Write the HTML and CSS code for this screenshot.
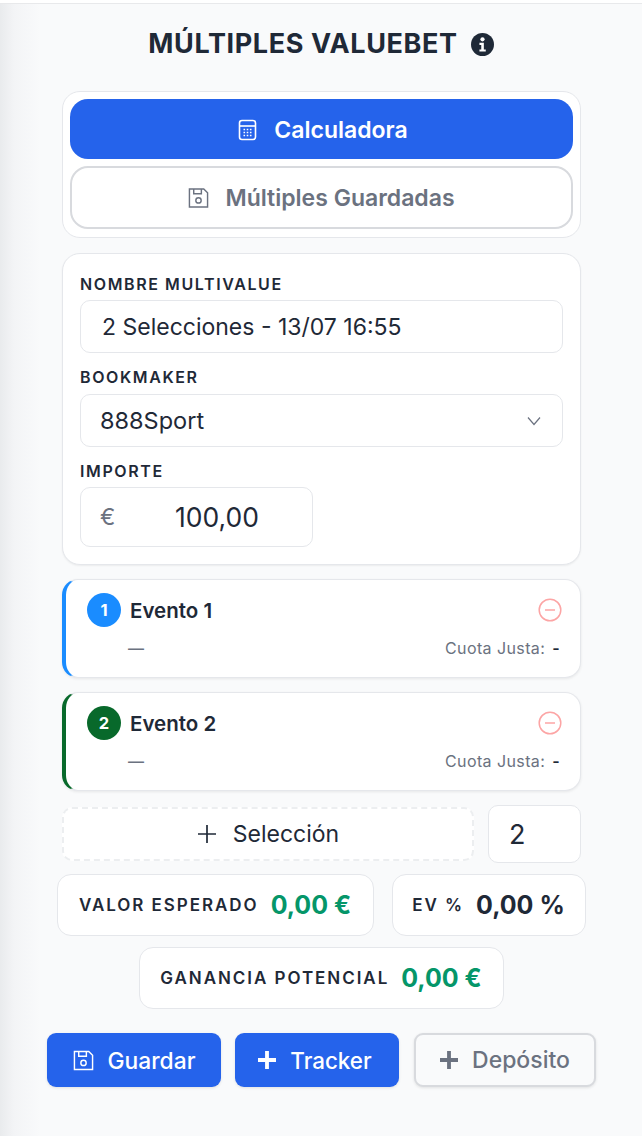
FILE: index.html
```html
<!DOCTYPE html>
<html lang="es">
<head>
<meta charset="utf-8">
<title>Múltiples Valuebet</title>
<link rel="stylesheet" href="styles.css">
</head>
<body>
<div class="topstrip"></div>
<main class="page">
  <h1 class="title">MÚLTIPLES VALUEBET
    <svg class="info" viewBox="0 0 24 24"><circle cx="12" cy="12" r="12" fill="#1f2937"/><circle cx="12" cy="6.6" r="2.2" fill="#fff"/><path d="M8.8 10.2h4.6v7h2v2.2H8.8v-2.2h1.9v-4.8H8.8z" fill="#fff"/></svg>
  </h1>

  <section class="tabs">
    <button class="tab tab-on">
      <svg class="tab-icon" viewBox="0 0 20 22" fill="none" stroke="#fff" stroke-width="1.6"><rect x="2" y="1.5" width="16" height="19" rx="2.5"/><path d="M2 7h16"/><path d="M6 10.5h1.6M9.2 10.5h1.6M12.4 10.5h1.6M6 13.5h1.6M9.2 13.5h1.6M12.4 13.5h1.6M6 16.5h1.6M9.2 16.5h1.6M12.4 16.5h1.6"/></svg>
      Calculadora
    </button>
    <button class="tab tab-off">
      <svg class="tab-icon" viewBox="0 0 22 22" fill="none" stroke="#6b7280" stroke-width="1.5"><path d="M1.5 1.5h15l4 4v15h-19z"/><path d="M6 1.5v5h8v-5"/><circle cx="11" cy="13.5" r="2.8"/></svg>
      Múltiples Guardadas
    </button>
  </section>

  <section class="form">
    <label class="lbl">NOMBRE MULTIVALUE</label>
    <div class="field name">2 Selecciones - 13/07 16:55</div>
    <label class="lbl lbl-wide">BOOKMAKER</label>
    <div class="field select">888Sport
      <svg class="chev" viewBox="0 0 14 10" fill="none" stroke="#6b7280" stroke-width="1.2"><path d="M1 1.5l6 7 6-7"/></svg>
    </div>
    <label class="lbl">IMPORTE</label>
    <div class="field amount"><span class="euro">€</span><span class="amount-val">100,00</span></div>
  </section>

  <section class="event ev-blue">
    <div class="ev-top">
      <span class="badge bg-blue">1</span><span class="ev-name">Evento 1</span>
      <svg class="minus" viewBox="0 0 24 24" fill="none" stroke="#fca5a5" stroke-width="1.5"><circle cx="12" cy="12" r="10.8"/><path d="M7 12h10"/></svg>
    </div>
    <div class="ev-bottom"><span class="dash">—</span><span class="fair">Cuota Justa: <b>-</b></span></div>
  </section>

  <section class="event ev-green">
    <div class="ev-top">
      <span class="badge bg-green">2</span><span class="ev-name">Evento 2</span>
      <svg class="minus" viewBox="0 0 24 24" fill="none" stroke="#fca5a5" stroke-width="1.5"><circle cx="12" cy="12" r="10.8"/><path d="M7 12h10"/></svg>
    </div>
    <div class="ev-bottom"><span class="dash">—</span><span class="fair">Cuota Justa: <b>-</b></span></div>
  </section>

  <div class="add-row">
    <button class="add">
      <svg class="plus-thin" viewBox="0 0 20 20" stroke="#1f2937" stroke-width="1.7"><path d="M10 1v18M1 10h18"/></svg>
      Selección
    </button>
    <div class="count">2</div>
  </div>

  <div class="stats stats-a">
    <div class="stat s-valor"><span class="stat-lbl">VALOR ESPERADO</span><span class="stat-val green">0,00 €</span></div>
    <div class="stat s-ev"><span class="stat-lbl">EV %</span><span class="stat-val">0,00 %</span></div>
  </div>
  <div class="stats stats-b">
    <div class="stat s-gan"><span class="stat-lbl">GANANCIA POTENCIAL</span><span class="stat-val green">0,00 €</span></div>
  </div>

  <div class="actions">
    <button class="act act-blue a1">
      <svg class="act-icon" viewBox="0 0 22 22" fill="none" stroke="#fff" stroke-width="1.5"><path d="M1.5 1.5h15l4 4v15h-19z"/><path d="M6 1.5v5h8v-5"/><circle cx="11" cy="13.5" r="2.8"/></svg>
      Guardar
    </button>
    <button class="act act-blue a2">
      <svg class="act-plus" viewBox="0 0 16 16" stroke="#fff" stroke-width="3.4"><path d="M8 0v16M0 8h16"/></svg>
      Tracker
    </button>
    <button class="act act-off a3">
      <svg class="act-plus" viewBox="0 0 16 16" stroke="#6b7280" stroke-width="3.4"><path d="M8 0v16M0 8h16"/></svg>
      Depósito
    </button>
  </div>
</main>
</body>
</html>
```
FILE: styles.css
```css
* { box-sizing: border-box; }
html, body { margin: 0; padding: 0; }
body {
  width: 642px;
  height: 1136px;
  overflow: hidden;
  font-family: Inter, "Liberation Sans", sans-serif;
  color: #1f2937;
  background: linear-gradient(90deg, #e9ebed 0, #f3f4f6 14px, #f9fafb 40px);
}
button { font-family: inherit; margin: 0; }
.topstrip { height: 4px; background: #fff; border-bottom: 1px solid #e8e9eb; }
.page { display: flex; flex-direction: column; align-items: center; }

.title {
  margin: 23px 0 0;
  height: 34px;
  display: flex;
  align-items: center;
  gap: 13px;
  font-size: 27px;
  font-weight: 700;
  line-height: 34px;
  letter-spacing: 0.6px;
  white-space: nowrap;
}
.info { width: 23px; height: 23px; }

.tabs, .form, .event, .add-row { margin-left: 1px; }

.tabs {
  margin-top: 30px;
  width: 519px;
  height: 147px;
  padding: 7px;
  display: flex;
  flex-direction: column;
  gap: 7px;
  background: #fff;
  border: 1px solid #e5e7eb;
  border-radius: 18px;
}
.tab {
  display: flex;
  align-items: center;
  justify-content: center;
  gap: 16px;
  width: 100%;
  font-size: 23px;
  font-weight: 600;
  border-radius: 18px;
}
.tab-on { height: 60px; padding: 2px 0 0 2px; background: #2563eb; color: #fff; border: 0; }
.tab-off { height: 63px; background: #fff; color: #6b7280; border: 2px solid #d8dade; }
.tab-icon { width: 21px; height: 22px; }

.form {
  margin-top: 15px;
  width: 519px;
  height: 312px;
  padding: 23px 17px 0;
  background: #fff;
  border: 1px solid #e5e7eb;
  border-radius: 18px;
  box-shadow: 0 1px 2px rgba(0, 0, 0, .06);
}
.lbl {
  display: block;
  height: 16px;
  margin-bottom: 7px;
  font-size: 16px;
  line-height: 14px;
  font-weight: 600;
  letter-spacing: 1.6px;
  white-space: nowrap;
}
.lbl-wide { margin-bottom: 8px; }
.field {
  display: flex;
  align-items: center;
  height: 53px;
  margin-bottom: 17px;
  background: #fff;
  border: 1px solid #e5e7eb;
  border-radius: 10px;
  font-size: 23.5px;
}
.name { padding-left: 21px; font-size: 23px; }
.select { padding-left: 19px; justify-content: space-between; padding-right: 21px; }
.chev { width: 14px; height: 10px; }
.amount { width: 233px; height: 60px; padding-left: 19px; margin-bottom: 0; font-size: 26.5px; }
.euro { color: #6b7280; font-size: 23px; width: 75px; }

.event {
  width: 519px;
  height: 99px;
  padding: 13px 18px 0 21px;
  background: #fff;
  border: 1px solid #e5e7eb;
  border-left-width: 4px;
  border-radius: 16px;
  box-shadow: 0 1px 3px rgba(0, 0, 0, .08);
}
.ev-blue { margin-top: 14px; border-left-color: #1a8cff; }
.ev-green { margin-top: 14px; border-left-color: #08692b; }
.ev-top { display: flex; align-items: center; height: 34px; }
.badge {
  width: 34px;
  height: 34px;
  display: flex;
  align-items: center;
  justify-content: center;
  border-radius: 50%;
  color: #fff;
  font-size: 16.5px;
  font-weight: 700;
}
.bg-blue { background: #1a8cff; }
.bg-green { background: #08692b; }
.ev-name { margin-left: 9px; font-size: 20.5px; font-weight: 600; }
.minus { margin-left: auto; width: 24px; height: 24px; }
.ev-bottom {
  display: flex;
  justify-content: space-between;
  align-items: center;
  margin-top: 9px;
  padding-left: 41px;
  height: 24px;
}
.dash { color: #6b7280; font-size: 16px; font-weight: 500; }
.fair { color: #6b7280; font-size: 16px; letter-spacing: .4px; margin-right: 2px; }
.fair b { color: #1f2937; font-weight: 600; margin-left: 2px; }

.add-row { margin-top: 14px; width: 519px; display: flex; align-items: center; gap: 14px; }
.add {
  width: 412px;
  height: 54px;
  display: flex;
  align-items: center;
  justify-content: center;
  gap: 16px;
  background: #fff;
  color: #1f2937;
  border: 2px dashed #eceef0;
  border-radius: 10px;
  font-size: 23px;
}
.plus-thin { width: 20px; height: 20px; }
.count {
  width: 93px;
  height: 58px;
  padding-left: 20px;
  display: flex;
  align-items: center;
  background: #fff;
  border: 1px solid #e5e7eb;
  border-radius: 10px;
  font-size: 27px;
}

.stats { display: flex; justify-content: center; gap: 18px; width: 100%; }
.stats-a { margin-top: 11px; }
.stats-b { margin-top: 11px; }
.stat {
  height: 62px;
  display: flex;
  align-items: center;
  justify-content: center;
  gap: 12px;
  background: #fff;
  border: 1px solid #e5e7eb;
  border-radius: 14px;
}
.s-valor { width: 317px; }
.s-ev { width: 194px; }
.s-gan { width: 365px; }
.stat-lbl { font-size: 17px; font-weight: 600; letter-spacing: 1.95px; white-space: nowrap; }
.stat-val { font-size: 25px; font-weight: 700; white-space: nowrap; }
.green { color: #059669; }

.actions { margin: 24px 0 0 2px; width: 550px; display: flex; gap: 14px; }
.act {
  height: 54px;
  display: flex;
  align-items: center;
  justify-content: center;
  gap: 14px;
  border-radius: 9px;
  font-size: 23px;
  font-weight: 500;
  box-shadow: 0 1px 3px rgba(0, 0, 0, .1);
}
.act-blue { background: #2563eb; color: #fff; border: 0; }
.act-off { background: #f9fafb; color: #6b7280; border: 2px solid #d8dade; }
.a1 { width: 174px; font-size: 22.8px; }
.a2 { width: 164px; font-size: 22.4px; padding-left: 2px; }
.a3 { width: 182px; margin-left: 1px; }
.act-icon { width: 21px; height: 21px; }
.act-plus { width: 18px; height: 18px; }
```
